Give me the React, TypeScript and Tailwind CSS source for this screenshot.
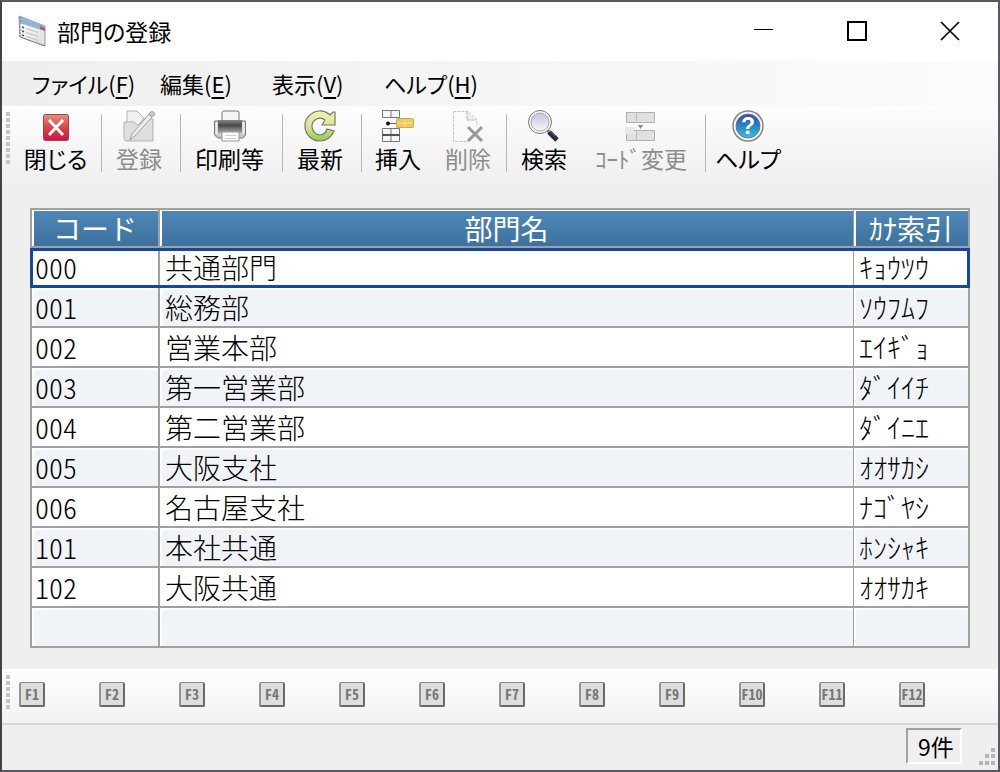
import type { ReactNode } from "react";

const rows = [
  { code: "000", name: "共通部門", kana: "ｷｮｳﾂｳ" },
  { code: "001", name: "総務部", kana: "ｿｳﾌﾑﾌ" },
  { code: "002", name: "営業本部", kana: "ｴｲｷﾞｮ" },
  { code: "003", name: "第一営業部", kana: "ﾀﾞｲｲﾁ" },
  { code: "004", name: "第二営業部", kana: "ﾀﾞｲﾆｴ" },
  { code: "005", name: "大阪支社", kana: "ｵｵｻｶｼ" },
  { code: "006", name: "名古屋支社", kana: "ﾅｺﾞﾔｼ" },
  { code: "101", name: "本社共通", kana: "ﾎﾝｼｬｷ" },
  { code: "102", name: "大阪共通", kana: "ｵｵｻｶｷ" },
  { code: "", name: "", kana: "" },
];

const menus = [
  { label: "ファイル", mnemonic: "F", width: "w-32" },
  { label: "編集", mnemonic: "E", width: "w-28" },
  { label: "表示", mnemonic: "V", width: "w-28" },
  { label: "ヘルプ", mnemonic: "H", width: "w-28" },
];

const fkeys = ["F1", "F2", "F3", "F4", "F5", "F6", "F7", "F8", "F9", "F10", "F11", "F12"];

function Icon({ children }: { children: ReactNode }) {
  return (
    <svg viewBox="0 0 32 32" className="block h-8 w-8 shrink-0" fill="none" aria-hidden="true">
      {children}
    </svg>
  );
}

function AppIcon() {
  return (
    <svg viewBox="0 0 28 32" className="block h-8 w-7" fill="none" aria-hidden="true">
      <defs>
        <linearGradient id="appPage" x1="0" y1="0" x2="1" y2="1">
          <stop offset="0" stopColor="#fff" />
          <stop offset="1" stopColor="#dcdcdc" />
        </linearGradient>
      </defs>
      <path d="M1 1 L27 11 V31 L2 22 Z" fill="url(#appPage)" stroke="#9a9a9a" />
      <path d="M1.5 1 L27 11 V16 L1.5 8 Z" fill="#8fb4d8" />
      <path d="M22 11 L27 13 V16 L22 14 Z" fill="#c4526a" />
      <path d="M4 12 l2 .7 M4 16 l2 .7 M4 20 l2 .7" stroke="#555" strokeWidth="1.5" />
      <path d="M8 13.500 l12 4 M8 17.500 l12 4 M8 21.500 l12 4" stroke="#c4c4c4" />
      <path d="M2 2 V22 L27 31" stroke="#777" strokeDasharray="2 1" />
    </svg>
  );
}

function CloseIcon() {
  return (
    <Icon>
      <defs>
        <linearGradient id="closeRed" x1="0" y1="0" x2="0" y2="1">
          <stop offset="0" stopColor="#ee9080" />
          <stop offset=".45" stopColor="#dc4a4c" />
          <stop offset="1" stopColor="#cf1244" />
        </linearGradient>
      </defs>
      <rect x="3.500" y="4.500" width="25" height="26" rx="2" fill="url(#closeRed)" stroke="#8f4a4a" />
      <path d="M9 10 L23 25 M23 10 L9 25" stroke="#fff" strokeWidth="3" />
    </Icon>
  );
}

function RegisterIcon() {
  return (
    <Icon>
      <path d="M4 12 V1 H14 L20 7 V12" fill="#f0f0f0" stroke="#b5b5b5" />
      <path d="M1 12 H11 L15 15 L21 9 H30 V31 H3 Q1 31 1 27 Z" fill="#dedede" stroke="#b0b0b0" />
      <path d="M7 30 L9 24 L26 4 L29 7 L12 26 Z" fill="#ececec" stroke="#a0a0a0" />
      <circle cx="29" cy="4" r="2.500" fill="#c8c8c8" stroke="#a5a5a5" />
    </Icon>
  );
}

function PrinterIcon() {
  return (
    <Icon>
      <defs>
        <linearGradient id="printerBody" x1="0" y1="0" x2="0" y2="1">
          <stop offset="0" stopColor="#888" />
          <stop offset=".4" stopColor="#4a4a4a" />
          <stop offset="1" stopColor="#a8a8a8" />
        </linearGradient>
      </defs>
      <path d="M8 11 V3 Q8 1 10 1 H23 Q25 1 25 3 V11" fill="#f4f4f4" stroke="#777" />
      <path d="M.5 11 H31.500 V25 L29 28 H4 L.5 25 Z" fill="#c8c8c8" stroke="#777" />
      <rect x="4" y="10" width="24" height="13" fill="url(#printerBody)" />
      <path d="M2.500 12 V24 M29.500 12 V24" stroke="#eee" strokeWidth="2" />
      <path d="M8 22 H25 V31 H8 Z" fill="#fff" stroke="#999" />
      <path d="M11 25.500 H22 M11 28.500 H22" stroke="#ccc" />
    </Icon>
  );
}

function RefreshIcon() {
  return (
    <Icon>
      <defs>
        <linearGradient id="refreshGreen" x1="0" y1="0" x2="0" y2="1">
          <stop offset="0" stopColor="#f1efb5" />
          <stop offset=".5" stopColor="#dfe596" />
          <stop offset="1" stopColor="#93c94a" />
        </linearGradient>
      </defs>
      <path
        d="M26 5 Q21 .5 15 1 A15 15 0 0 0 1 17 A15 15 0 0 0 16 31 A15 15 0 0 0 30 21 L23 19 A8 8 0 0 1 16 25 A8.500 8.500 0 0 1 8 16 A8 8 0 0 1 21 10 L18 15 H31 V2 L29 2 Z"
        fill="url(#refreshGreen)"
        stroke="#75796a"
        strokeWidth="1.200"
      />
    </Icon>
  );
}

function InsertIcon() {
  return (
    <Icon>
      <path d="M.5 .5 H17.500 V7.500 H.5 Z M9 .5 V7.500" fill="#f7f7f7" stroke="#777" />
      <path d="M.5 18.500 H17.500 V31.500 H.5 Z M9 18.500 V31.500" fill="#f7f7f7" stroke="#777" />
      <path d="M0 25 H18" stroke="#555" strokeWidth="2" />
      <path d="M6 13.500 H15" stroke="#666" />
      <circle cx="6" cy="13.500" r="2" fill="#111" />
      <rect x="14.500" y="8.500" width="17" height="9" rx="1" fill="#ecca63" stroke="#d2ab42" />
      <path d="M16 13 H30 M23 10 V17" stroke="#f8e39a" />
    </Icon>
  );
}

function DeleteIcon() {
  return (
    <Icon>
      <path d="M1.500 1.500 H16 L25 10 V16 M1.500 1.500 V31.500 H15" stroke="#c4c4c4" strokeDasharray="3 1" />
      <path d="M15 2 V10 H24" fill="#eee" stroke="#b0b0b0" strokeDasharray="3 1" />
      <path d="M16 17 L30 31 M30 17 L16 31" stroke="#989898" strokeWidth="3" />
    </Icon>
  );
}

function SearchIcon() {
  return (
    <Icon>
      <defs>
        <linearGradient id="lens" x1="0" y1="0" x2="0" y2="1">
          <stop offset="0" stopColor="#cac2e0" />
          <stop offset=".5" stopColor="#ddd9ef" />
          <stop offset="1" stopColor="#fafaff" />
        </linearGradient>
      </defs>
      <path d="M18 19 L23 24" stroke="#888" strokeWidth="3" />
      <path d="M21 22 L29 30" stroke="#292b42" strokeWidth="5" />
      <path d="M22 21 L27 26" stroke="#686e9a" />
      <circle cx="12" cy="12" r="11.500" fill="#f8f8f8" stroke="#777" />
      <circle cx="12" cy="12" r="9" fill="url(#lens)" stroke="#aaa" />
    </Icon>
  );
}

function CodeIcon() {
  return (
    <Icon>
      <path d="M1.500 2.500 H29.500 V12.500 H1.500 Z" fill="#e0e0e0" stroke="#b0b0b0" />
      <path d="M11.500 2 V13" stroke="#b8b8b8" />
      <path d="M1.500 20.500 H29.500 V30.500 H1.500 Z" fill="#e0e0e0" stroke="#b0b0b0" />
      <path d="M11.500 22 V31" stroke="#b8b8b8" />
      <path d="M0 17 H9 V24 H0 Z" fill="#e8e8e8" />
      <path d="M13 15 H18 L15.500 19 Z" fill="#888" />
    </Icon>
  );
}

function HelpIcon() {
  return (
    <Icon>
      <defs>
        <linearGradient id="helpBlue" x1="0" y1="0" x2="0" y2="1">
          <stop offset="0" stopColor="#3549a8" />
          <stop offset=".45" stopColor="#277fc4" />
          <stop offset="1" stopColor="#31c4dc" />
        </linearGradient>
      </defs>
      <circle cx="16" cy="16" r="15" fill="#f5f5f5" stroke="#858585" strokeWidth="1.500" />
      <circle cx="16" cy="16" r="12" fill="url(#helpBlue)" stroke="#6b7796" />
      <text
        x="16"
        y="24"
        textAnchor="middle"
        fill="#fff"
        className="font-['Liberation_Sans',sans-serif] text-[23px] font-bold"
      >
        ?
      </text>
    </Icon>
  );
}

function ToolButton({
  icon,
  label,
  width,
  disabled = false,
}: {
  icon: ReactNode;
  label: string;
  width: string;
  disabled?: boolean;
}) {
  return (
    <button
      type="button"
      disabled={disabled}
      className={`${width} flex shrink-0 flex-col items-center text-black disabled:text-[#8c8c8c]`}
    >
      {icon}
      <span className="text-[23px] leading-8 whitespace-nowrap">{label}</span>
    </button>
  );
}

function Separator() {
  return <div className="mt-1 ml-1 h-[58px] w-px shrink-0 bg-[#b5b5b5]" />;
}

function Grip({ dots }: { dots: number }) {
  return (
    <div className="mr-1 flex w-2 shrink-0 flex-col items-end gap-[2px] pt-[2px]">
      {Array.from({ length: dots }, (_, i) => (
        <div key={i} className="h-1 w-1 bg-[#c4c4c4]" />
      ))}
    </div>
  );
}

function TitleBar() {
  return (
    <header className="flex h-[59px] items-center bg-white pr-0.5 pb-0.5 pl-4">
      <AppIcon />
      <h1 className="ml-[11px] text-[23px] leading-8">部門の登録</h1>
      <div className="ml-auto flex self-stretch">
        <button type="button" aria-label="最小化" className="flex w-[93px] items-center justify-center">
          <svg viewBox="0 0 20 20" className="h-5 w-5" fill="none">
            <path d="M0 8.500 H19" stroke="#000" />
          </svg>
        </button>
        <button type="button" aria-label="最大化" className="flex w-[93px] items-center justify-center">
          <svg viewBox="0 0 20 20" className="h-5 w-5" fill="none">
            <rect x="1" y="1" width="18" height="18" stroke="#000" strokeWidth="2" />
          </svg>
        </button>
        <button type="button" aria-label="ウィンドウを閉じる" className="flex w-[93px] items-center justify-center">
          <svg viewBox="0 0 20 20" className="h-5 w-5" fill="none">
            <path d="M1 1 L19 19 M19 1 L1 19" stroke="#000" strokeWidth="1.700" />
          </svg>
        </button>
      </div>
    </header>
  );
}

function MenuBar() {
  return (
    <nav className="flex h-[45px] items-center bg-linear-to-r from-[#efefef] to-[#fbfbfb] pb-0.5 pl-[30px]">
      {menus.map((m) => (
        <button
          key={m.mnemonic}
          type="button"
          className={`${m.width} text-left text-[22px] leading-8 whitespace-nowrap`}
        >
          {m.label}(<span className="underline underline-offset-4">{m.mnemonic}</span>)
        </button>
      ))}
    </nav>
  );
}

function Toolbar() {
  return (
    <div className="flex h-[78px] items-start bg-linear-to-b from-[#fdfdfd] to-[#efefef] pt-1">
      <Grip dots={9} />
      <ToolButton icon={<CloseIcon />} label="閉じる" width="w-[83px]" />
      <Separator />
      <ToolButton icon={<RegisterIcon />} label="登録" width="w-[74px]" disabled />
      <Separator />
      <ToolButton icon={<PrinterIcon />} label="印刷等" width="w-[97px]" />
      <Separator />
      <ToolButton icon={<RefreshIcon />} label="最新" width="w-[74px]" />
      <Separator />
      <ToolButton icon={<InsertIcon />} label="挿入" width="w-[72px]" />
      <ToolButton icon={<DeleteIcon />} label="削除" width="w-[68px]" disabled />
      <Separator />
      <ToolButton icon={<SearchIcon />} label="検索" width="w-[74px]" />
      <ToolButton icon={<CodeIcon />} label="ｺｰﾄﾞ変更" width="w-[120px]" disabled />
      <Separator />
      <ToolButton icon={<HelpIcon />} label="ヘルプ" width="w-[84px]" />
    </div>
  );
}

function DepartmentTable() {
  const head =
    "h-[38px] border-b-2 border-[#a0a0a0] p-0 font-normal shadow-[inset_2px_1px_0_#fff] bg-linear-to-b from-[#4f87b6] to-[#3d729f]";
  return (
    <table className="w-full table-fixed border-separate border-spacing-0 border-t-2 border-[#a0a0a0] text-[28px] leading-8 font-light [font-feature-settings:normal]">
      <colgroup>
        <col className="w-[130px]" />
        <col />
        <col className="w-[116px]" />
      </colgroup>
      <thead className="text-white">
        <tr>
          <th className={`${head} border-x-2`}>コード</th>
          <th className={`${head} border-r`}>部門名</th>
          <th className={`${head} border-r-2`}>ｶﾅ索引</th>
        </tr>
      </thead>
      <tbody>
        {rows.map((row, i) => {
          const shade = i % 2 === 1 ? "bg-[#f0f4f9] shadow-[inset_2px_2px_0_#fff]" : "bg-white";
          return (
            <tr
              key={i}
              aria-selected={i === 0}
              className={i === 0 ? "outline-3 -outline-offset-3 outline-[#17479e]" : ""}
            >
              <td
                className={`${shade} h-10 border-x-2 border-b-2 border-[#a0a0a0] p-0 pl-[3px] [font-feature-settings:'hwid']`}
              >
                {row.code}
              </td>
              <td className={`${shade} border-r border-b-2 border-[#a0a0a0] p-0 pl-[5px]`}>{row.name}</td>
              <td className={`${shade} border-r-2 border-b-2 border-[#a0a0a0] p-0 pl-[5px] whitespace-nowrap`}>
                {row.kana}
              </td>
            </tr>
          );
        })}
      </tbody>
    </table>
  );
}

function FunctionKeys() {
  return (
    <div className="flex h-14 items-start border-b-2 border-[#d5d5d5] bg-linear-to-b from-[#fefefe] to-[#f2f2f2] pt-1">
      <Grip dots={6} />
      <div className="ml-[5px] flex gap-[54px] pt-[9px]">
        {fkeys.map((k) => (
          <button
            key={k}
            type="button"
            className="flex h-[25px] w-[26px] items-center justify-center rounded-xs border-t border-r-2 border-b-2 border-l-2 border-t-[#8a8a8a] border-r-[#6a6a6a] border-b-[#6a6a6a] border-l-[#929292] bg-[#dedede] text-[14px] leading-5 font-bold text-[#777] [font-feature-settings:'hwid']"
          >
            {k}
          </button>
        ))}
      </div>
    </div>
  );
}

function StatusBar() {
  return (
    <footer className="flex h-[45px] items-start justify-end bg-[#efefef] pt-[3px]">
      <div className="flex h-9 w-14 items-center justify-center border-2 border-t-[#a0a0a0] border-r-white border-b-white border-l-[#a0a0a0] pl-1 text-[23px] leading-8">
        9件
      </div>
      <svg viewBox="0 0 18 18" className="mt-[20px] mr-0.5 ml-4 h-[18px] w-[18px]" fill="#b5b5b5" aria-hidden="true">
        <path d="M13 0h4v4h-4z M7 6h4v4h-4z M13 6h4v4h-4z M1 13h4v4h-4z M7 13h4v4h-4z M13 13h4v4h-4z" />
      </svg>
    </footer>
  );
}

export default function App() {
  return (
    <div className="flex min-h-screen flex-col border-2 border-[#5a5963] border-l-[#444446] bg-[#efefef] font-['Noto_Sans_CJK_JP',sans-serif] text-black [font-feature-settings:'palt']">
      <TitleBar />
      <MenuBar />
      <Toolbar />
      <main className="flex-1 px-7 pt-6 pb-[21px]">
        <DepartmentTable />
      </main>
      <FunctionKeys />
      <StatusBar />
    </div>
  );
}
